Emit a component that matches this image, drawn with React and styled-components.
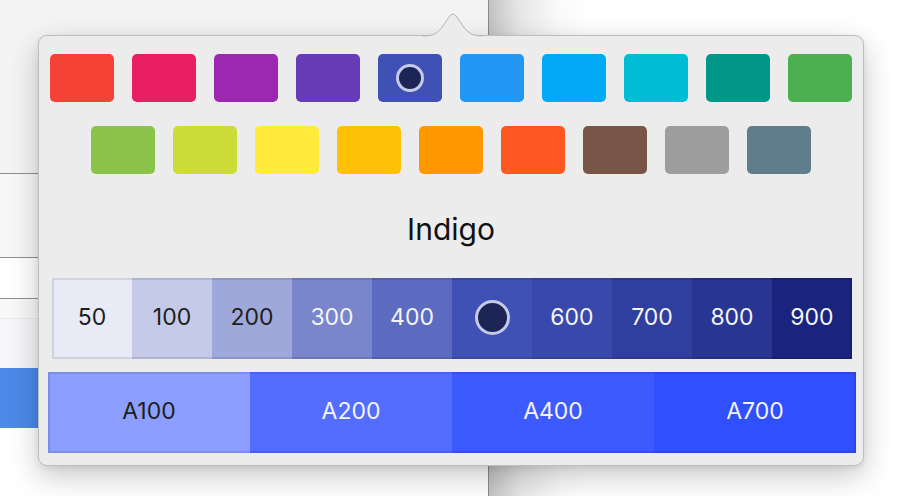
import React from 'react';
import styled, { createGlobalStyle } from 'styled-components';

const GlobalStyle = createGlobalStyle`
  html, body { margin: 0; padding: 0; background: #fff; overflow: hidden; }
  body { font-family: Inter, "Liberation Sans", sans-serif; }
`;

const MAIN = [
  '#F44336', '#E91E63', '#9C27B0', '#673AB7', '#3F51B5',
  '#2196F3', '#03A9F4', '#00BCD4', '#009688', '#4CAF50',
];
const MORE = [
  '#8BC34A', '#CDDC39', '#FFEB3B', '#FFC107', '#FF9800',
  '#FF5722', '#795548', '#9E9E9E', '#607D8B',
];
const SHADES = [
  ['50', '#E8EAF6', true], ['100', '#C5CAE9', true], ['200', '#9FA8DA', true],
  ['300', '#7986CB'], ['400', '#5C6BC0'], ['500', '#3F51B5'],
  ['600', '#3949AB'], ['700', '#303F9F'], ['800', '#283593'], ['900', '#1A237E'],
];
const ACCENTS = [
  ['A100', '#8C9EFF', true], ['A200', '#536DFE'], ['A400', '#3D5AFE'], ['A700', '#304FFE'],
];
const BACK_ROWS = [
  { h: 173, bg: '#f4f4f4', line: '#8e8e8e' },
  { h: 83, bg: '#f7f7f7', line: '#8e8e8e' },
  { h: 40, bg: '#ffffff', line: '#8e8e8e' },
  { h: 19, bg: '#f8f8f8', line: '#ececec' },
  { h: 49, bg: '#f6f6f8' },
  { h: 60, bg: '#4b8ae8' },
];

const Screen = styled.div`
  position: relative;
  width: 902px;
  height: 496px;
  display: flex;
  overflow: hidden;
`;

const LeftPane = styled.div`
  width: 488px;
  display: flex;
  flex-direction: column;
  background: #fff;
`;

const BackRow = styled.div`
  height: ${p => p.h}px;
  background: ${p => p.bg};
  border-bottom: ${p => (p.line ? `1px solid ${p.line}` : 'none')};
`;

const RightPane = styled.div`
  flex: 1;
  border-left: 1px solid #8a8a8a;
  background: linear-gradient(to right, #c2c2c2 0, #e6e6e6 30px, #fafafa 70px, #fff 100px);
`;

const Popover = styled.div`
  position: absolute;
  left: 38px;
  top: 35px;
  width: 824px;
  background: #ececec;
  border: 1px solid #bdbdbd;
  border-radius: 9px;
  box-shadow: 0 10px 30px rgba(0, 0, 0, 0.22), 0 2px 6px rgba(0, 0, 0, 0.08);
  display: flex;
  flex-direction: column;
  align-items: center;
  padding: 18px 0 12px;
`;

const Arrow = styled.svg`
  position: absolute;
  left: 384px;
  top: -25px;
  width: 60px;
  height: 27px;
  overflow: visible;
`;

const SwatchRow = styled.div`
  display: flex;
  gap: 18px;
  margin-bottom: ${p => p.gapBelow || 0}px;
`;

const Swatch = styled.div`
  width: 64px;
  height: 48px;
  border-radius: 5px;
  background: ${p => p.color};
  display: flex;
  align-items: center;
  justify-content: center;
`;

const Dot = styled.div`
  width: ${p => p.size}px;
  height: ${p => p.size}px;
  box-sizing: border-box;
  border-radius: 50%;
  border: 3px solid #c5cae9;
  background: #1c2556;
`;

const Title = styled.div`
  height: 104px;
  box-sizing: border-box;
  padding-top: 5px;
  display: flex;
  align-items: center;
  justify-content: center;
  font-size: 30px;
  color: #111;
`;

const Strip = styled.div`
  position: relative;
  display: flex;
  width: ${p => p.w}px;
  height: 81px;
  margin-left: 2px;
  margin-bottom: ${p => p.gapBelow || 0}px;

  &::after {
    content: '';
    position: absolute;
    inset: 0;
    border: 2px solid rgba(0, 0, 0, 0.1);
    pointer-events: none;
  }
`;

const Cell = styled.div`
  flex: 1;
  background: ${p => p.color};
  color: ${p => (p.light ? '#1e1e1e' : '#f4f4f4')};
  display: flex;
  align-items: center;
  justify-content: center;
  padding-bottom: 3px;
  font-size: 23px;
`;

export default function App() {
  return (
    <Screen>
      <GlobalStyle />
      <LeftPane>
        {BACK_ROWS.map((r, i) => (
          <BackRow key={i} h={r.h} bg={r.bg} line={r.line} />
        ))}
      </LeftPane>
      <RightPane />

      <Popover>
        <Arrow viewBox="0 0 60 27">
          <path d="M0 25 C10 25 14 23 20 15 L26 6 Q30 0 34 6 L40 15 C46 23 50 25 60 25 L60 27 L0 27 Z" fill="#ececec" />
          <path d="M0 25 C10 25 14 23 20 15 L26 6 Q30 0 34 6 L40 15 C46 23 50 25 60 25" fill="none" stroke="#b5b5b5" strokeWidth="1" />
        </Arrow>

        <SwatchRow gapBelow={24}>
          {MAIN.map(c => (
            <Swatch key={c} color={c}>{c === '#3F51B5' && <Dot size={28} />}</Swatch>
          ))}
        </SwatchRow>
        <SwatchRow>
          {MORE.map(c => <Swatch key={c} color={c} />)}
        </SwatchRow>

        <Title>Indigo</Title>

        <Strip w={800} gapBelow={13}>
          {SHADES.map(([label, c, light]) => (
            <Cell key={label} color={c} light={light}>
              {label === '500' ? <Dot size={35} /> : label}
            </Cell>
          ))}
        </Strip>
        <Strip w={808}>
          {ACCENTS.map(([label, c, light]) => (
            <Cell key={label} color={c} light={light}>{label}</Cell>
          ))}
        </Strip>
      </Popover>
    </Screen>
  );
}
